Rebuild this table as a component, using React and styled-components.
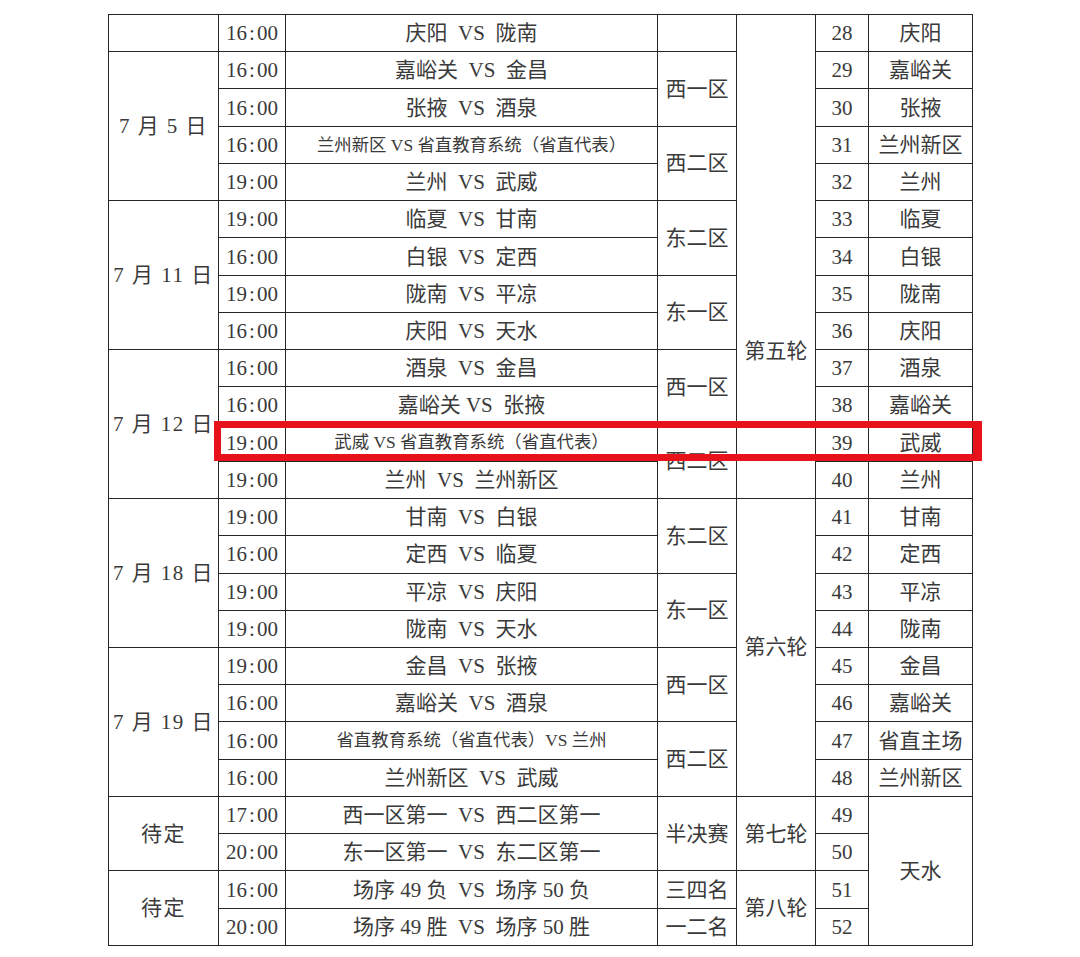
import React from "react";
import styled, { createGlobalStyle } from "styled-components";

const GlobalStyle = createGlobalStyle`
  html, body {
    margin: 0;
    padding: 0;
    background: #ffffff;
  }
  body {
    font-family: "Liberation Serif", "Noto Sans CJK SC", serif;
    color: #3a3a3a;
  }
`;

const rows = [
  { no: 28, time: "16:00", match: "庆阳  VS  陇南", venue: "庆阳" },
  { no: 29, time: "16:00", match: "嘉峪关  VS  金昌", venue: "嘉峪关" },
  { no: 30, time: "16:00", match: "张掖  VS  酒泉", venue: "张掖" },
  { no: 31, time: "16:00", match: "兰州新区 VS 省直教育系统（省直代表）", small: true, venue: "兰州新区" },
  { no: 32, time: "19:00", match: "兰州  VS  武威", venue: "兰州" },
  { no: 33, time: "19:00", match: "临夏  VS  甘南", venue: "临夏" },
  { no: 34, time: "16:00", match: "白银  VS  定西", venue: "白银" },
  { no: 35, time: "19:00", match: "陇南  VS  平凉", venue: "陇南" },
  { no: 36, time: "16:00", match: "庆阳  VS  天水", venue: "庆阳" },
  { no: 37, time: "16:00", match: "酒泉  VS  金昌", venue: "酒泉" },
  { no: 38, time: "16:00", match: "嘉峪关 VS  张掖", venue: "嘉峪关" },
  { no: 39, time: "19:00", match: "武威 VS 省直教育系统（省直代表）", small: true, venue: "武威" },
  { no: 40, time: "19:00", match: "兰州  VS  兰州新区", venue: "兰州" },
  { no: 41, time: "19:00", match: "甘南  VS  白银", venue: "甘南" },
  { no: 42, time: "16:00", match: "定西  VS  临夏", venue: "定西" },
  { no: 43, time: "19:00", match: "平凉  VS  庆阳", venue: "平凉" },
  { no: 44, time: "19:00", match: "陇南  VS  天水", venue: "陇南" },
  { no: 45, time: "19:00", match: "金昌  VS  张掖", venue: "金昌" },
  { no: 46, time: "16:00", match: "嘉峪关  VS  酒泉", venue: "嘉峪关" },
  { no: 47, time: "16:00", match: "省直教育系统（省直代表）VS 兰州", small: true, venue: "省直主场" },
  { no: 48, time: "16:00", match: "兰州新区  VS  武威", venue: "兰州新区" },
  { no: 49, time: "17:00", match: "西一区第一  VS  西二区第一" },
  { no: 50, time: "20:00", match: "东一区第一  VS  东二区第一" },
  { no: 51, time: "16:00", match: "场序 49 负  VS  场序 50 负" },
  { no: 52, time: "20:00", match: "场序 49 胜  VS  场序 50 胜" },
];

// merged cells, keyed by the match number where they start
const dates = {
  28: { text: "", span: 1 },
  29: { text: "7 月 5 日", span: 4 },
  33: { text: "7 月 11 日", span: 4 },
  37: { text: "7 月 12 日", span: 4 },
  41: { text: "7 月 18 日", span: 4 },
  45: { text: "7 月 19 日", span: 4 },
  49: { text: "待定", span: 2 },
  51: { text: "待定", span: 2 },
};

const zones = {
  28: { text: "", span: 1 },
  29: { text: "西一区", span: 2 },
  31: { text: "西二区", span: 2 },
  33: { text: "东二区", span: 2 },
  35: { text: "东一区", span: 2 },
  37: { text: "西一区", span: 2 },
  39: { text: "西二区", span: 2 },
  41: { text: "东二区", span: 2 },
  43: { text: "东一区", span: 2 },
  45: { text: "西一区", span: 2 },
  47: { text: "西二区", span: 2 },
  49: { text: "半决赛", span: 2 },
  51: { text: "三四名", span: 1 },
  52: { text: "一二名", span: 1 },
};

const rounds = {
  28: { text: "第五轮", span: 13, lift: 136 },
  41: { text: "第六轮", span: 8 },
  49: { text: "第七轮", span: 2 },
  51: { text: "第八轮", span: 2 },
};

const Page = styled.div`
  padding: 14px 0 0 108px;
`;

const Frame = styled.div`
  position: relative;
  width: 864px;
`;

const Table = styled.table`
  border-collapse: collapse;
  table-layout: fixed;
  width: 864px;
`;

const Row = styled.tr`
  height: 37.24px;
`;

const Cell = styled.td`
  border: 1px solid #262626;
  padding: 0;
  padding-top: 1px;
  text-align: center;
  vertical-align: ${(p) => (p.$lift ? "bottom" : "middle")};
  padding-bottom: ${(p) => (p.$lift ? `${p.$lift}px` : "0")};
  font-size: ${(p) => (p.$small ? "17.4px" : "21px")};
  letter-spacing: ${(p) => (p.$wide ? "1.5px" : "0")};
  line-height: 1;
  white-space: pre;
  overflow: hidden;
`;

const Colon = styled.span`
  padding: 0 2px;
`;

const Highlight = styled.div`
  position: absolute;
  left: 106px;
  top: 407px;
  width: 768px;
  height: 40px;
  box-sizing: border-box;
  border: 7px solid #e8121a;
  border-right-width: 9px;
  pointer-events: none;
`;

const Time = ({ value }) => {
  const [h, m] = value.split(":");
  return (
    <>
      {h}
      <Colon>:</Colon>
      {m}
    </>
  );
};

export default function App() {
  return (
    <>
      <GlobalStyle />
      <Page>
        <Frame>
          <Table>
            <colgroup>
              <col style={{ width: 110 }} />
              <col style={{ width: 67 }} />
              <col style={{ width: 372 }} />
              <col style={{ width: 79 }} />
              <col style={{ width: 79 }} />
              <col style={{ width: 53 }} />
              <col style={{ width: 104 }} />
            </colgroup>
            <tbody>
              {rows.map((r) => {
                const d = dates[r.no];
                const z = zones[r.no];
                const rd = rounds[r.no];
                return (
                  <Row key={r.no}>
                    {d && (
                      <Cell rowSpan={d.span} $wide>
                        {d.text}
                      </Cell>
                    )}
                    <Cell>
                      <Time value={r.time} />
                    </Cell>
                    <Cell $small={r.small}>{r.match}</Cell>
                    {z && <Cell rowSpan={z.span}>{z.text}</Cell>}
                    {rd && (
                      <Cell rowSpan={rd.span} $lift={rd.lift}>
                        {rd.text}
                      </Cell>
                    )}
                    <Cell>{r.no}</Cell>
                    {r.venue && <Cell>{r.venue}</Cell>}
                    {r.no === 49 && <Cell rowSpan={4}>天水</Cell>}
                  </Row>
                );
              })}
            </tbody>
          </Table>
          <Highlight />
        </Frame>
      </Page>
    </>
  );
}
